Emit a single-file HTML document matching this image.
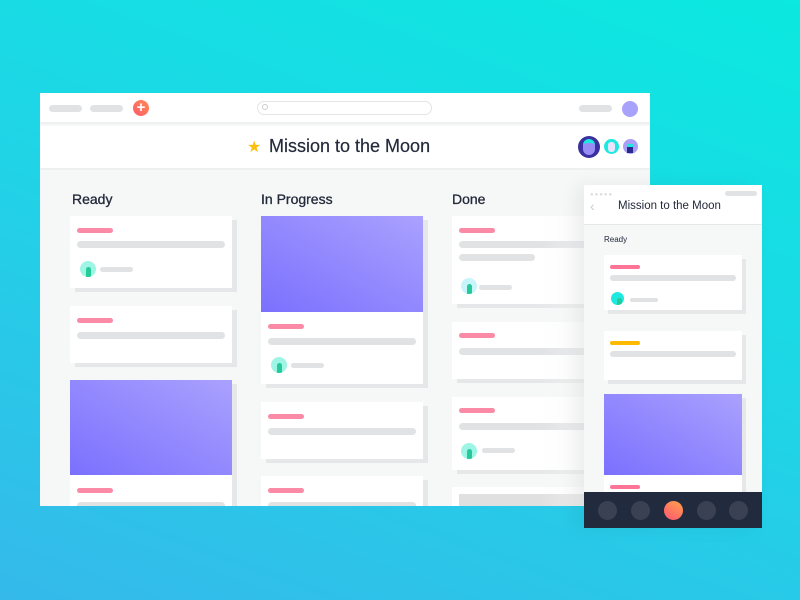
<!DOCTYPE html><html><head><style>
*{margin:0;padding:0;box-sizing:border-box}
body{width:800px;height:600px;overflow:hidden;position:relative;font-family:"Liberation Sans",sans-serif;background:linear-gradient(200deg,#0be9e0 0%,#1ed6e6 45%,#35b9ea 100%)}
.a{position:absolute}
.pill{position:absolute;border-radius:4px;background:#e1e2e4}
.pk{position:absolute;height:5px;border-radius:3px;background:#fb8aa6}
.card{position:absolute;background:#fff;box-shadow:5px 4px 0 #e6e7e8}
.img{position:absolute;background:linear-gradient(30deg,#7b70fe,#aaa1fe)}
.av{position:absolute;width:16px;height:16px;border-radius:50%;background:#9ef5e6;overflow:hidden}
.av:after{content:"";position:absolute;left:6px;top:6px;width:5px;height:10px;background:#26c998;border-radius:3px 3px 0 0}
.h{position:absolute;font-size:14px;color:#232a3a;-webkit-text-stroke:0.3px #232a3a}
</style></head><body>
<div class="a" style="left:40px;top:93px;width:610px;height:413px;background:#f6f7f7;overflow:hidden">
 <div class="a" style="left:0;top:0;width:610px;height:31px;background:#fff;border-bottom:2px solid #eeeff0"></div>
 <div class="pill" style="left:9px;top:12px;width:33px;height:7px"></div>
 <div class="pill" style="left:50px;top:12px;width:33px;height:7px"></div>
 <div class="a" style="left:93px;top:7px;width:16px;height:16px;border-radius:50%;background:linear-gradient(45deg,#fe5a6b,#ff8a55);color:#fff;font-size:15px;line-height:16px;text-align:center;font-weight:bold">+</div>
 <div class="a" style="left:217px;top:8px;width:175px;height:14px;border:1px solid #e3e4e6;border-radius:7px"></div>
 <div class="a" style="left:222px;top:11px;width:6px;height:6px;border:1px solid #ccc;border-radius:50%"></div>
 <div class="pill" style="left:539px;top:12px;width:33px;height:7px"></div>
 <div class="a" style="left:582px;top:8px;width:16px;height:16px;border-radius:50%;background:#a9a2fb"></div>
 <div class="a" style="left:0;top:33px;width:610px;height:44px;background:#fff;border-bottom:2px solid #eeeff0"></div>
 <div class="a" style="left:207px;top:44px;color:#fdbf10;font-size:16px">★</div>
 <div class="a" style="left:229px;top:43px;font-size:18px;color:#232a3a;-webkit-text-stroke:0.2px #232a3a">Mission to the Moon</div>
 <div class="a" style="left:538px;top:43px;width:22px;height:22px;border-radius:50%;background:#3a30a0;overflow:hidden"><div class="a" style="left:5px;top:3px;width:12px;height:16px;border-radius:6px;background:#9a8cf5;border-top:4px solid #1ee9e0"></div></div>
 <div class="a" style="left:564px;top:46px;width:15px;height:15px;border-radius:50%;background:#1ee9e0"><div class="a" style="left:4px;top:3px;width:7px;height:10px;border-radius:3px;background:#e8e4fb"></div></div>
 <div class="a" style="left:583px;top:46px;width:15px;height:15px;border-radius:50%;background:#a99ff7"><div class="a" style="left:4px;top:5px;width:6px;height:9px;background:#2c2a88;border-top:3px solid #1ee9e0"></div></div>
 <div class="h" style="left:32px;top:98px">Ready</div>
 <div class="h" style="left:221px;top:98px">In Progress</div>
 <div class="h" style="left:412px;top:98px">Done</div>
 <div class="card" style="left:30px;top:123px;width:162px;height:72px"><div class="pk" style="left:7px;top:12px;width:36px"></div><div class="pill" style="left:7px;top:25px;width:148px;height:7px"></div><div class="av" style="left:10px;top:45px"></div><div class="pill" style="left:30px;top:51px;width:33px;height:5px"></div></div>
 <div class="card" style="left:30px;top:213px;width:162px;height:57px"><div class="pk" style="left:7px;top:12px;width:36px"></div><div class="pill" style="left:7px;top:26px;width:148px;height:7px"></div></div>
 <div class="card" style="left:30px;top:287px;width:162px;height:140px"><div class="img" style="left:0;top:0;width:162px;height:95px"></div><div class="pk" style="left:7px;top:108px;width:36px"></div><div class="pill" style="left:7px;top:122px;width:148px;height:7px"></div></div>
 <div class="card" style="left:221px;top:123px;width:162px;height:168px"><div class="img" style="left:0;top:0;width:162px;height:96px"></div><div class="pk" style="left:7px;top:108px;width:36px"></div><div class="pill" style="left:7px;top:122px;width:148px;height:7px"></div><div class="av" style="left:10px;top:141px"></div><div class="pill" style="left:30px;top:147px;width:33px;height:5px"></div></div>
 <div class="card" style="left:221px;top:309px;width:162px;height:57px"><div class="pk" style="left:7px;top:12px;width:36px"></div><div class="pill" style="left:7px;top:26px;width:148px;height:7px"></div></div>
 <div class="card" style="left:221px;top:383px;width:162px;height:60px"><div class="pk" style="left:7px;top:12px;width:36px"></div><div class="pill" style="left:7px;top:26px;width:148px;height:7px"></div></div>
 <div class="card" style="left:412px;top:123px;width:162px;height:88px"><div class="pk" style="left:7px;top:12px;width:36px"></div><div class="pill" style="left:7px;top:25px;width:148px;height:7px"></div><div class="pill" style="left:7px;top:38px;width:76px;height:7px"></div><div class="av" style="left:9px;top:62px;background:#c8f4fb"></div><div class="pill" style="left:27px;top:69px;width:33px;height:5px"></div></div>
 <div class="card" style="left:412px;top:229px;width:162px;height:57px"><div class="pk" style="left:7px;top:11px;width:36px"></div><div class="pill" style="left:7px;top:26px;width:148px;height:7px"></div></div>
 <div class="card" style="left:412px;top:304px;width:162px;height:73px"><div class="pk" style="left:7px;top:11px;width:36px"></div><div class="pill" style="left:7px;top:26px;width:148px;height:7px"></div><div class="av" style="left:9px;top:46px"></div><div class="pill" style="left:30px;top:51px;width:33px;height:5px"></div></div>
 <div class="card" style="left:412px;top:394px;width:162px;height:40px"><div class="a" style="left:7px;top:7px;width:148px;height:20px;background:#e0e0e1"></div></div>
 <div class="a" style="left:500px;top:78px;width:44px;height:335px;background:linear-gradient(90deg,rgba(246,247,247,0),rgba(246,247,247,.5))"></div>
</div>
<div class="a" style="left:584px;top:185px;width:178px;height:343px;background:#f6f7f7;overflow:hidden;box-shadow:-8px 0 18px rgba(0,0,0,.06)">
 <div class="a" style="left:0;top:0;width:178px;height:40px;background:#fff;border-bottom:1px solid #e6e7e8"></div>
 <div class="a" style="left:6px;top:7px;color:#ddd;font-size:6px;letter-spacing:1px">●●●●●</div>
 <div class="pill" style="left:141px;top:6px;width:32px;height:5px"></div>
 <div class="a" style="left:6px;top:13px;color:#ccc;font-size:14px">‹</div>
 <div class="a" style="left:34px;top:15px;font-size:11.5px;color:#232a3a">Mission to the Moon</div>
 <div class="a" style="left:20px;top:50px;font-size:8px;color:#232a3a">Ready</div>
 <div class="card" style="left:20px;top:70px;width:138px;height:55px;box-shadow:4px 4px 0 #e6e7e8"><div class="pk" style="left:6px;top:10px;width:30px;height:4px;background:#fe7496"></div><div class="pill" style="left:6px;top:20px;width:126px;height:6px"></div><div class="av" style="left:7px;top:37px;width:13px;height:13px;background:#1ee9e0"></div><div class="pill" style="left:26px;top:43px;width:28px;height:4px"></div></div>
 <div class="card" style="left:20px;top:146px;width:138px;height:49px;box-shadow:4px 4px 0 #e6e7e8"><div class="pk" style="left:6px;top:10px;width:30px;height:4px;background:#ffb900"></div><div class="pill" style="left:6px;top:20px;width:126px;height:6px"></div></div>
 <div class="card" style="left:20px;top:209px;width:138px;height:110px;box-shadow:4px 4px 0 #e6e7e8"><div class="img" style="left:0;top:0;width:138px;height:81px"></div><div class="pk" style="left:6px;top:91px;width:30px;height:4px;background:#fe7496"></div></div>
 <div class="a" style="left:0;top:307px;width:178px;height:36px;background:#212b3d"></div>
 <div class="a" style="left:14px;top:316px;width:19px;height:19px;border-radius:50%;background:#3a4152"></div>
 <div class="a" style="left:47px;top:316px;width:19px;height:19px;border-radius:50%;background:#3a4152"></div>
 <div class="a" style="left:80px;top:316px;width:19px;height:19px;border-radius:50%;background:linear-gradient(30deg,#fe5572,#ffa24c)"></div>
 <div class="a" style="left:113px;top:316px;width:19px;height:19px;border-radius:50%;background:#3a4152"></div>
 <div class="a" style="left:145px;top:316px;width:19px;height:19px;border-radius:50%;background:#3a4152"></div>
</div>
</body></html>
